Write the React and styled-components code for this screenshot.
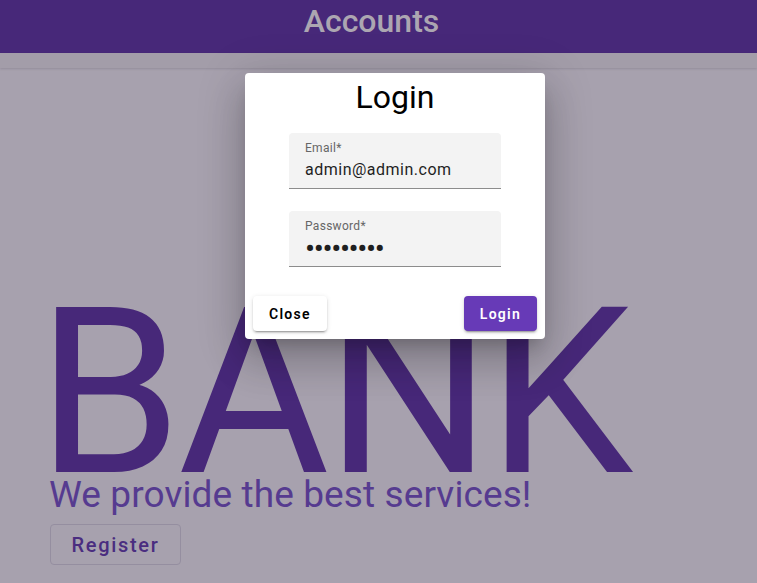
import React, { useState } from 'react'
import styled, { createGlobalStyle } from 'styled-components'

const GlobalStyle = createGlobalStyle`
html, body {
  margin: 0;
  padding: 0;
  background: #a7a1ae;
  font-family: Roboto, "Noto Sans", sans-serif;
}
* { box-sizing: border-box; }
`

const App = () => {
  const [email, setEmail] = useState('admin@admin.com')
  const [password, setPassword] = useState('admin1234')

  return (
    <Page>
      <GlobalStyle />
      <Header>
        <HeaderTitle>Accounts</HeaderTitle>
      </Header>
      <SubBar />
      <Hero>
        <BigTitle>BANK</BigTitle>
        <Tagline>We provide the best services!</Tagline>
        <OutlineButton>Register</OutlineButton>
      </Hero>

      <Backdrop>
        <Dialog>
          <DialogTitle>Login</DialogTitle>
          <Form>
            <Field>
              <FieldLabel>Email*</FieldLabel>
              <FieldInput value={email} onChange={e => setEmail(e.target.value)} />
            </Field>
            <Field>
              <FieldLabel>Password*</FieldLabel>
              <FieldInput type="password" secret value={password} onChange={e => setPassword(e.target.value)} />
            </Field>
          </Form>
          <Actions>
            <DialogButton>Close</DialogButton>
            <DialogButton primary>Login</DialogButton>
          </Actions>
        </Dialog>
      </Backdrop>
    </Page>
  )
}

const Page = styled.div`
min-height: 583px;
position: relative;
overflow: hidden;
`
const Header = styled.header`
height: 53px;
background: #472879;
display: flex;
justify-content: center;
padding: 2px 14px 0 0;
`
const HeaderTitle = styled.h1`
margin: 0;
font-size: 32px;
font-weight: 500;
line-height: normal;
color: #aca6b1;
`
const SubBar = styled.div`
height: 15px;
background: #a39da9;
box-shadow: 0 1px 2px rgba(60, 50, 70, 0.18);
`
const Hero = styled.section`
padding: 245px 0 0 48px;
display: flex;
flex-direction: column;
align-items: flex-start;
`
const BigTitle = styled.div`
margin-left: -11px;
font-size: 232px;
line-height: 160px;
font-weight: 400;
letter-spacing: -3.6px;
color: #472879;
`
const Tagline = styled.div`
font-size: 37px;
line-height: 40px;
letter-spacing: 0.1px;
color: #563b90;
margin: 2px 0 0 1px;
`
const OutlineButton = styled.button`
margin: 9px 0 0 2px;
width: 131px;
height: 41px;
background: transparent;
border: 1px solid #958ea0;
border-radius: 4px;
font-family: Roboto, sans-serif;
font-size: 20px;
font-weight: 500;
letter-spacing: 1.7px;
color: #4a2d80;
cursor: pointer;
`
const Backdrop = styled.div`
position: absolute;
inset: 0;
`
const Dialog = styled.div`
position: absolute;
left: 245px;
top: 73px;
width: 300px;
height: 266px;
background: #fff;
border-radius: 4px;
display: flex;
flex-direction: column;
padding: 5px 8px 8px;
box-shadow: 0px 11px 15px -7px rgba(0,0,0,0.2), 0px 24px 38px 3px rgba(0,0,0,0.14), 0px 9px 46px 8px rgba(0,0,0,0.12);
`
const DialogTitle = styled.h2`
margin: 0;
text-align: center;
font-size: 32px;
font-weight: 400;
line-height: normal;
color: #000;
`
const Form = styled.div`
margin-top: 17px;
display: flex;
flex-direction: column;
align-items: center;
gap: 22px;
`
const Field = styled.label`
width: 212px;
height: 56px;
background: #f3f3f3;
border-radius: 4px 4px 0 0;
border-bottom: 1px solid #8c8c8c;
display: flex;
flex-direction: column;
padding: 7px 16px 0;
`
const FieldLabel = styled.span`
font-size: 12px;
line-height: 16px;
color: #666;
letter-spacing: 0.3px;
`
const FieldInput = styled.input`
border: none;
outline: none;
background: transparent;
padding: 0;
margin-top: 3px;
width: 100%;
height: 22px;
font-family: Roboto, sans-serif;
font-size: ${p => (p.secret ? '30px' : '16px')};
letter-spacing: ${p => (p.secret ? '-1.4px' : '0.5px')};
line-height: 22px;
color: #1f1f1f;
`
const Actions = styled.div`
margin-top: auto;
display: flex;
justify-content: space-between;
`
const DialogButton = styled.button`
height: 35px;
padding: 0 16px;
border: none;
border-radius: 4px;
font-family: Roboto, sans-serif;
font-size: 14px;
font-weight: 600;
letter-spacing: 1.25px;
background: ${p => (p.primary ? '#673ab7' : '#fff')};
color: ${p => (p.primary ? '#fff' : '#000')};
box-shadow: 0px 3px 1px -2px rgba(0,0,0,0.2), 0px 2px 2px 0px rgba(0,0,0,0.14), 0px 1px 5px 0px rgba(0,0,0,0.12);
cursor: pointer;
`

export default App
